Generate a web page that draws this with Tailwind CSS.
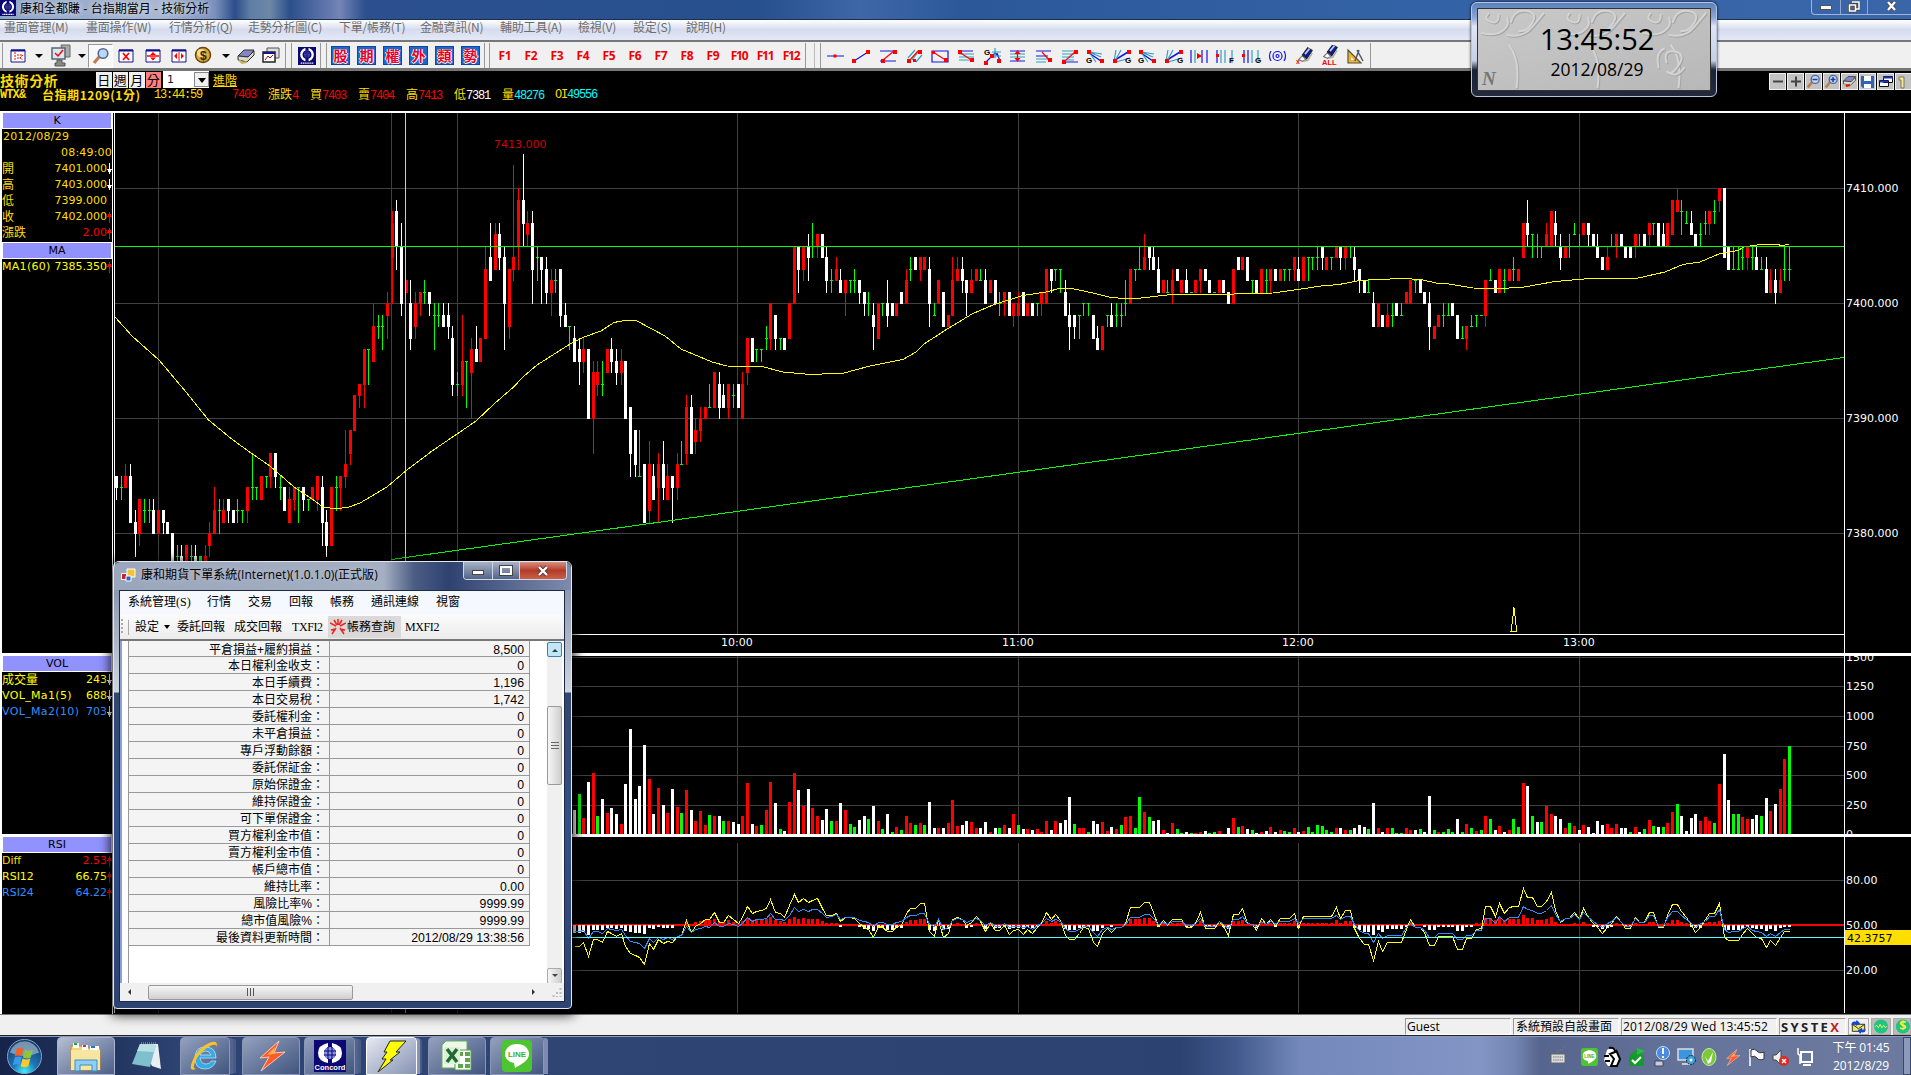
<!DOCTYPE html>
<html lang="zh-Hant">
  <head>
    <meta charset="UTF-8" />
    <meta name="viewport" content="width=device-width, initial-scale=1.0" />
    <title>康和全都賺 - 台指期當月 - 技術分析</title>
    <script src="https://cdn.jsdelivr.net/npm/@tailwindcss/browser@4"></script>
  </head>
  <body
    class="relative flex h-screen flex-col overflow-hidden bg-black font-['Liberation_Sans','Noto_Sans_CJK_TC',sans-serif] text-[12px] leading-none whitespace-nowrap"
  >
    <!-- Shared symbols -->
    <svg class="hidden">
      <symbol id="concord" viewBox="0 0 20 20">
        <rect width="20" height="20" fill="#0b0773" />
        <circle cx="10" cy="8.5" r="6.3" fill="none" stroke="#fff" stroke-width="2.6" />
        <path d="M10 0v4M10 13v4" stroke="#0b0773" stroke-width="3.4" />
        <circle cx="10" cy="8.5" r="3.4" fill="#4146a8" />
        <path d="M7 7h6M7 10h6M10 5v7" stroke="#0b0773" stroke-width=".7" />
        <path d="M3 18h14" stroke="#fff" stroke-width="1.4" stroke-dasharray="1.5 .6" />
      </symbol>
      <symbol id="bolt" viewBox="0 0 32 32">
        <path d="M24 1 5 18l9-1-8 14 24-19-11 1z" fill="#ff5a2a" stroke="#ffc9b5" stroke-width="1" />
        <path d="m20 7-8 8 7-1z" fill="#ffb04a" />
      </symbol>
      <symbol id="pen" viewBox="0 0 20 20">
        <path d="m3 15 4-4 4 4-4 2z" fill="#fff" stroke="#777" />
        <path d="m7 10 6-8 5 3-6 9z" fill="#0b1a9a" stroke="#222" />
        <path d="m10 9 5-6" stroke="#b8c8ff" stroke-width="2" />
        <path d="m8 17 5-1 5-8" stroke="#aaa" fill="none" stroke-width="1.5" />
      </symbol>
      <symbol id="lens" viewBox="0 0 18 18">
        <path d="m2 16 5-6" stroke="#c47b4a" stroke-width="3" />
        <circle cx="11" cy="6.5" r="4.8" fill="#bcd8f4" stroke="#55679c" stroke-width="1.6" />
      </symbol>
      <symbol id="printer" viewBox="0 0 20 18">
        <path d="M2 9 8 3h10l-5 7z" fill="#8486c8" stroke="#333" />
        <path d="M2 9v4l9 2 7-7V4l-6 6z" fill="#d8d8c8" stroke="#333" />
        <path d="m3 13 3 3 5-1" stroke="#c9b060" stroke-width="2" fill="none" />
      </symbol>
      <symbol id="line" viewBox="0 0 30 32">
        <rect width="30" height="32" rx="4" fill="#4cc531" />
        <path d="M15 4C8 4 3 8 3 14c0 5 4 8 9 9l1 5c5-3 14-7 14-14 0-6-5-10-12-10z" fill="#fff" />
        <text x="15" y="17" text-anchor="middle" font-size="8" font-weight="700" fill="#3fb026" font-family="Liberation Sans">LINE</text>
      </symbol>
      <symbol id="up" viewBox="0 0 5 12"><path d="M2 1h1v11H2zM1 3h3v2H1zM0 5h5v1H0z" fill="#f00" /></symbol>
      <symbol id="down" viewBox="0 0 5 12"><path d="M2 0h1v11H2zM1 7h3v2H1zM0 6h5v1H0z" fill="#fff" /></symbol>
    </svg>

    <!-- Title bar -->
    <header
      class="flex h-5 shrink-0 items-start bg-[linear-gradient(90deg,#8da3c8_0,#a8b6cf_160px,#7a90bd_215px,#2b4d8a_235px,#5f7da5_250px,#6d87a5_270px,#2b4f8c_290px,#7484b8_340px,#2c508f_365px,#27508f_760px,#3e67a8_860px,#2c5899_960px,#3464a8_1500px,#3a66a8_1911px)] border-b border-[#1b2f50]"
    >
      <svg class="h-4 w-4"><use href="#concord" /></svg>
      <span class="ml-1 pt-[3px] text-[12px] text-black [text-shadow:0_0_6px_#fff]">康和全都賺 - 台指期當月 - 技術分析</span>
      <div class="ml-auto flex h-[15px] w-[100px] rounded-bl border-b border-l border-[#9fb4d8] text-white">
        <div class="flex w-[29px] items-center justify-center border-r border-[#8ea6d0]">
          <div class="mt-px h-[5px] w-3 border border-[#555] bg-white"></div>
        </div>
        <div class="flex w-[27px] items-center justify-center border-r border-[#8ea6d0]">
          <svg class="h-3 w-3" fill="none"><path d="M4 1h7v7H8M1.500 4h6v6h-6z" stroke="#444" stroke-width="3" /><path d="M4 1h7v7H8M1.500 4h6v6h-6z" stroke="#fff" stroke-width="1.500" /></svg>
        </div>
        <div class="flex flex-1 items-center justify-center pl-1">
          <svg class="h-3 w-3"><path d="m2 1 7 8M9 1 2 9" stroke="#444" stroke-width="4" /><path d="m2 1 7 8M9 1 2 9" stroke="#fff" stroke-width="2.400" /></svg>
        </div>
      </div>
    </header>

    <!-- Menu -->
    <nav
      class="flex h-5 shrink-0 border-t border-white bg-linear-to-b from-[#fbfcfe] via-[#d6dcee] via-45% to-[#e4e9f8] pl-1 font-['Noto_Sans_CJK_TC',sans-serif] text-[12px] leading-[12px] tracking-[-0.2px] text-[#6d6d6d]"
    >
      <span class="w-[82px]">畫面管理(M)</span>
      <span class="w-[83px]">畫面操作(W)</span>
      <span class="w-[79px]">行情分析(Q)</span>
      <span class="w-[91px]">走勢分析圖(C)</span>
      <span class="w-[81px]">下單/帳務(T)</span>
      <span class="w-[80px]">金融資訊(N)</span>
      <span class="w-[78px]">輔助工具(A)</span>
      <span class="w-[55px]">檢視(V)</span>
      <span class="w-[53px]">設定(S)</span>
      <span>說明(H)</span>
    </nav>

    <!-- Toolbar -->
    <div class="flex h-[31px] shrink-0 items-center border-t-2 border-b-3 border-[#767676] bg-[#f0f0f0] pt-px">
      <div class="ml-0.5 h-[25px] w-px bg-[#999]"></div>
      <svg class="ml-1.5 h-5 w-[20px]" viewBox="0 0 20 20">
        <path d="M2 4h14v12H2z" fill="#fff" stroke="#13138a" /><path d="M2 4.500h14" stroke="#13138a" stroke-width="2" /><path d="M6 6v8M8 9h6M8 12h3l3-3M11 12l3 2" stroke="red" stroke-width="1" fill="none" stroke-dasharray="2 1" />
      </svg>
      <svg class="ml-[6px] h-2 w-2"><path d="M0 2h8L4 6z" /></svg>
      <svg class="ml-1.5 h-6 w-6" viewBox="0 0 24 24">
        <path d="M12 1h9v12h-7z" fill="#aaa" stroke="#666" /><path d="M3 4h13v11H3z" fill="#d8e8ee" stroke="#567" stroke-width="1.500" /><path d="m6 9 3 3 5-6" stroke="red" stroke-width="1.500" fill="none" /><path d="M8 16h5v3h3v3H6v-3h2z" fill="#888" stroke="#555" />
      </svg>
      <svg class="ml-[5px] h-2 w-2"><path d="M0 2h8L4 6z" /></svg>
      <div class="ml-0.5 flex h-6 w-[25px] items-center justify-center border border-t-[#999] border-r-white border-b-white border-l-[#999] bg-[#f8f8f8]">
        <svg class="h-[18px] w-[18px]"><use href="#lens" /></svg>
      </div>
      <svg class="ml-[5px] h-5 w-[78px]" viewBox="0 0 78 20" stroke="#13138a" fill="#fff">
        <path d="M1 4h14v12H1zM28 4h14v12H28zM54 4h14v12H54z" /><path d="M1 4.500h14M28 4.500h14M54 4.500h14" stroke-width="2" />
        <path d="m5 7 6 7M11 7l-6 7" stroke="red" stroke-width="1.700" /><path d="M29 10h12" stroke="red" stroke-width="1.500" /><path d="m32 9 3-3 3 3zM32 11.500l3 3 3-3zM59 7v6l-3-3zM63 7v6l3-3z" fill="red" stroke="none" /><path d="M61 6v9" stroke="red" />
      </svg>
      <svg class="-ml-1 h-5 w-[22px]" viewBox="0 0 22 20">
        <circle cx="11" cy="9" r="7.500" fill="#d8a83a" stroke="#6b4308" stroke-width="1.500" /><circle cx="9" cy="7" r="4" fill="#f3dc92" /><text x="8" y="14" font-size="12" font-weight="700" fill="#3c2503">$</text>
      </svg>
      <svg class="ml-2 h-2 w-2"><path d="M0 2h8L4 6z" /></svg>
      <svg class="ml-1.5 h-[18px] w-5"><use href="#printer" /></svg>
      <svg class="ml-[5px] h-5 w-5" viewBox="0 0 20 20">
        <path d="M6 2h12v10H6z" fill="#ddd" stroke="#555" /><path d="M2 6h12v10H2z" fill="#fff" stroke="#222" stroke-width="1.500" /><path d="m4 14 3-4 2 2 3-3" stroke="#c00" fill="none" /><path d="M2 7h12" stroke="#13138a" stroke-width="2" />
      </svg>
      <div class="ml-1 h-[25px] w-px bg-[#999]"></div>
      <div class="ml-[5px] h-[25px] w-px bg-[#999]"></div>
      <svg class="ml-[6px] h-5 w-[18px]" preserveAspectRatio="none"><use href="#concord" /></svg>
      <div class="ml-[4px] h-[25px] w-px bg-[#999]"></div>
      <div class="ml-[5px] h-[25px] w-px bg-[#999]"></div>
      <div class="ml-[4px] flex gap-[7px] font-['Noto_Sans_CJK_TC',sans-serif] text-[14px] leading-[17px] font-bold text-[#e8002a] [text-shadow:1px_0_0_#fff,-1px_0_0_#fff,0_1px_0_#fff]">
        <span class="h-[19px] w-[19px] border border-[#0d47a5] bg-[#1b69ce] text-center">股</span>
        <span class="h-[19px] w-[19px] border border-[#0d47a5] bg-[#1b69ce] text-center">期</span>
        <span class="h-[19px] w-[19px] border border-[#0d47a5] bg-[#1b69ce] text-center">權</span>
        <span class="h-[19px] w-[19px] border border-[#0d47a5] bg-[#1b69ce] text-center">外</span>
        <span class="h-[19px] w-[19px] border border-[#0d47a5] bg-[#1b69ce] text-center">類</span>
        <span class="h-[19px] w-[19px] border border-[#0d47a5] bg-[#1b69ce] text-center">勢</span>
      </div>
      <div class="ml-1 h-[25px] w-px bg-[#999]"></div>
      <div class="ml-1 h-[25px] w-px bg-[#999]"></div>
      <div class="ml-0.5 flex text-center font-['Open_Sans',sans-serif] text-[12px] font-bold tracking-[-0.2px] text-[#f00000]">
        <span class="w-[26px]">F1</span><span class="w-[26px]">F2</span><span class="w-[26px]">F3</span><span class="w-[26px]">F4</span>
        <span class="w-[26px]">F5</span><span class="w-[26px]">F6</span><span class="w-[26px]">F7</span><span class="w-[26px]">F8</span>
        <span class="w-[26px]">F9</span><span class="w-[26px] tracking-[-1.3px]">F10</span><span class="w-[26px] tracking-[-1.3px]">F11</span><span class="w-[26px] tracking-[-1.3px]">F12</span>
      </div>
      <div class="ml-px h-[25px] w-px bg-[#999]"></div>
      <div class="ml-[8px] h-[25px] w-px bg-[#bbb]"></div>
      <div class="ml-[5px] h-[25px] w-px bg-[#999]"></div>
      <!-- Drawing tools, one 26px cell each -->
      <svg class="h-[22px] w-[549px]" viewBox="823 0 549 22" fill="none" stroke-width="1.2">
        <g stroke="#1414e6">
          <path d="M829 11h17M856 16l14-9M882 6h16M882 16h16M934 6h16v11h-16zM960 6h15M1038 6h15M1038 11h12M1064 17h16M988 17l9-9 3 3M999 8l3 8M1012 6h15M1012 16h15M1193 5v13M1209 5v13M1204 5v13M1219 5v13M1246 5v13M1250 5v13" />
          <path d="m1091 8 12 8M1117 15l13-8M1143 8l12 8M1169 15l13-8" stroke-width="1.5" />
          <circle cx="1279.500" cy="11" r="1.500" /><circle cx="1279.500" cy="11" r="4.500" />
          <path d="M1273 6q-3 5 0 10M1286 6q3 5 0 10" />
        </g>
        <path d="M961 9h15M961 12h15M961 15h15M1012 9h15M1012 12h15M1038 14h14M1038 17h10M1064 6h12M1064 9h12M1064 12h12M1064 15h12M997 3v10M994 7h9M994 11h9M910 13l7-8M914 15l7-9M918 17l6-7M1091 7l13 2M1091 7l12 5M1091 7l7 10M1116 16l2-11M1117 16l6-11M1118 17l14-4M1143 7l13 2M1143 7l12 5M1143 7l7 10M1168 16l2-11M1169 16l6-11M1170 17l14-4M1197 5v13M1223 5v13M1227 5v13M1234 5v13M1254 5v13M1260 5v13" stroke="#2f9fc0" />
        <g stroke="#e11" stroke-width="1.300"><path d="m885 15 11-9M935 7l14 9M961 7l14 9M912 15l8-9M1019.500 7v8M1044 7l8 9M1068 15l9-8" /><path d="M1199 11h4" /></g>
        <g fill="#f00">
          <path d="M835.500 9.500h3v3h-3zM854 14h4v4h-4zM868 5h4v4h-4zM883 14h4v4h-4zM895 5h4v4h-4zM909 14h4v4h-4zM920 5h4v4h-4zM915 14h3v3h-3zM934 6h3v3h-3zM946 13h4v4h-4zM960 5h4v4h-4zM972 13h4v4h-4zM986 16h4v4h-4zM992 9h4v4h-4zM999 14h4v4h-4zM1016.500 9l3-4 3 4zM1016.500 13l3 4 3-4zM1050 13h4v4h-4zM1064 15h4v4h-4zM1076 5h4v4h-4zM1089 5h4v4h-4zM1102 14h4v4h-4zM1115 14h4v4h-4zM1129 5h4v4h-4zM1141 5h4v4h-4zM1154 14h4v4h-4zM1167 14h4v4h-4zM1181 5h4v4h-4zM1199 8l5 3-5 3zM1218 9h3v3h-3zM1244 9h3v3h-3z" />
        </g>
        <g fill="#000" font-size="8" font-weight="700" font-family="Liberation Sans">
          <text x="986" y="10">G</text><text x="1088" y="18">G</text><text x="1127" y="18">G</text><text x="1140" y="18">G</text><text x="1179" y="18">G</text><text x="1231" y="18">F</text><text x="1257" y="18">G</text>
        </g>
        <use href="#pen" x="1298" y="1" width="18" height="18" />
        <use href="#pen" x="1323" y="-2" width="18" height="18" />
        <g fill="#f00" font-weight="700" font-family="Liberation Sans"><text x="1298" y="19" font-size="7">x</text><text x="1324" y="20" font-size="7.500">ALL</text></g>
        <path d="M1350 5v13h13z" fill="#efb13c" stroke="#553" /><path d="M1353 12v3h3z" fill="#fff" /><path d="m1359 5 6 11M1361 5l-4 11" stroke="#556" stroke-width="1.500" />
      </svg>
      <div class="h-[25px] w-px bg-[#999]"></div>
    </div>

    <!-- Quote header -->
    <section class="relative h-10 shrink-0 bg-black font-['Noto_Sans_CJK_TC',sans-serif] text-[#ffde00]">
      <div class="flex h-[17px] items-center">
        <b class="w-24 text-[14px] leading-4 tracking-[0.6px]">技術分析</b>
        <div class="flex gap-px text-center text-[13px] leading-4 text-black">
          <span class="h-4 w-[15.500px] bg-[#f0f0f0]">日</span><span class="h-4 w-[15.500px] bg-[#f0f0f0]">週</span><span class="h-4 w-[15.500px] bg-[#f0f0f0]">月</span><span class="h-4 w-[15.500px] bg-[#ff7f7f]">分</span>
        </div>
        <div class="ml-0.5 flex h-[17px] w-[46px] items-center justify-between bg-white pl-1 font-['DejaVu_Sans',sans-serif] text-[11px] text-[#113]">
          1
          <span class="flex h-[15px] w-[15px] items-center justify-center border border-[#888] bg-[#f0f0f0]"><svg class="h-2 w-2"><path d="M0 2h8L4 7z" /></svg></span>
        </div>
        <u class="ml-1 text-[12px] leading-4">進階</u>
      </div>
      <div class="flex h-[14px] items-center text-[12px] leading-[14px]">
        <b class="w-[42px] font-['Liberation_Mono',monospace] tracking-[-0.9px]">WTX&amp;</b>
        <b class="w-28 tracking-[0.550px]">台指期1209(1分)</b>
        <span class="w-[78px] font-['Liberation_Mono',monospace] tracking-[-1.200px]">13:44:59</span>
        <span class="w-9 font-['Liberation_Mono',monospace] tracking-[-1.200px] text-[#f00]">7403</span>
        <span class="w-[42px]">漲跌<i class="font-['Liberation_Mono',monospace] tracking-[-1.200px] text-[#f00] not-italic">4</i></span>
        <span class="w-12">買<i class="font-['Liberation_Mono',monospace] tracking-[-1.200px] text-[#f00] not-italic">7403</i></span>
        <span class="w-12">賣<i class="font-['Liberation_Mono',monospace] tracking-[-1.200px] text-[#f00] not-italic">7404</i></span>
        <span class="w-12">高<i class="font-['Liberation_Mono',monospace] tracking-[-1.200px] text-[#f00] not-italic">7413</i></span>
        <span class="w-12">低<i class="font-['Liberation_Mono',monospace] tracking-[-1.200px] text-white not-italic">7381</i></span>
        <span class="w-[53px]">量<i class="font-['Liberation_Mono',monospace] tracking-[-1.200px] text-[#0ff] not-italic">48276</i></span>
        <span class="font-['Liberation_Mono',monospace] tracking-[-1.200px]">OI<i class="text-[#0ff] not-italic">49556</i></span>
      </div>
      <!-- Chart buttons -->
      <div class="absolute top-0.5 right-0 flex w-[142px] gap-px overflow-hidden">
        <svg class="h-[17px] w-[17px] shrink-0 border border-[#eee] bg-[#c3c3c3]"><path d="M3 7.500h10" stroke="#444" stroke-width="2" /></svg>
        <svg class="h-[17px] w-[17px] shrink-0 border border-[#eee] bg-[#c3c3c3]"><path d="M3 7.500h10M8 2.500v10" stroke="#444" stroke-width="2" /></svg>
        <svg class="h-[17px] w-[17px] shrink-0 border border-[#eee] bg-[#c3c3c3]"><use href="#lens" width="15" height="15" /><path d="M6.500 5.500h5" stroke="#223f9a" stroke-width="1.500" /></svg>
        <svg class="h-[17px] w-[17px] shrink-0 border border-[#eee] bg-[#c3c3c3]"><use href="#lens" width="15" height="15" /><path d="M6.500 5.500h5M9 3v5" stroke="#223f9a" stroke-width="1.500" /></svg>
        <svg class="h-[17px] w-[17px] shrink-0 border border-[#eee] bg-[#c3c3c3]"><use href="#printer" width="15" height="14" /><path d="m4 12 4-1" stroke="red" stroke-width="2" /></svg>
        <svg class="h-[17px] w-[17px] shrink-0 border border-[#eee] bg-[#c3c3c3]"><path d="M1 2h13v12H3l-2-2z" fill="#2f63b8" /><path d="M4 2h7v5H4zM4 10h7v4H4z" fill="#fff" /></svg>
        <svg class="h-[17px] w-[17px] shrink-0 border border-[#eee] bg-[#c3c3c3]"><path d="M5.500 2.500h9v6h-9zM1.500 6.500h9v6h-9z" fill="#fff" stroke="#111" /><path d="M5 3.500h10M2 7.500h8" stroke="#1b2fc0" stroke-width="2" /></svg>
        <svg class="h-[17px] w-[17px] shrink-0 border border-[#eee] bg-[#c3c3c3]"><path d="M3 3h5v11H5V6H3z" fill="#ffe98a" stroke="#776" /></svg>
      </div>
    </section>

    <!-- Indicator values + charts -->
    <main class="flex h-[903px] shrink-0">
      <aside
        class="flex w-[113px] shrink-0 flex-col border-t-2 border-r border-l-2 border-white font-['DejaVu_Sans','Noto_Sans_CJK_TC',sans-serif] text-[11px] text-[#ffde00]"
      >
        <div class="h-[543px] border-b-3 border-white">
          <div class="h-4 border-x border-b border-white bg-[#9292ff] text-center leading-[15px] text-black">K</div>
          <div class="h-4 pl-px leading-4 tracking-[0.3px]">2012/08/29</div>
          <div class="h-4 text-right leading-4 tracking-[0.2px]">08:49:00</div>
          <div class="flex h-4 items-center leading-4"><span class="text-[12px]">開</span><span class="ml-auto">7401.000</span><svg class="h-3 w-[5px]"><use href="#down" /></svg></div>
          <div class="flex h-4 items-center leading-4"><span class="text-[12px]">高</span><span class="ml-auto">7403.000</span><svg class="h-3 w-[5px]"><use href="#down" /></svg></div>
          <div class="flex h-4 items-center leading-4"><span class="text-[12px]">低</span><span class="mr-[5px] ml-auto">7399.000</span></div>
          <div class="flex h-4 items-center leading-4"><span class="text-[12px]">收</span><span class="ml-auto">7402.000</span><svg class="h-3 w-[5px]"><use href="#up" /></svg></div>
          <div class="flex h-4 items-center leading-4"><span class="text-[12px]">漲跌</span><span class="ml-auto text-[#f00]">2.00</span><svg class="h-3 w-[5px]"><use href="#up" /></svg></div>
          <div class="mt-px h-[17px] border border-white bg-[#9292ff] text-center leading-[15px] text-black">MA</div>
          <div class="flex h-4 items-center leading-4 text-[#ff0]"><span class="tracking-[0.3px]">MA1(60)</span><span class="ml-auto">7385.350</span><svg class="h-3 w-[5px]"><use href="#up" /></svg></div>
        </div>
        <div class="h-[181px] border-b-3 border-white text-[#ff0]">
          <div class="h-4 border-x border-b border-white bg-[#9292ff] text-center leading-[15px] text-black">VOL</div>
          <div class="flex h-4 items-center leading-4"><span class="text-[12px]">成交量</span><span class="ml-auto">243</span><svg class="h-3 w-[5px]"><use href="#down" /></svg></div>
          <div class="flex h-4 items-center leading-4"><span class="tracking-[0.35px]">VOL_Ma1(5)</span><span class="ml-auto">688</span><svg class="h-3 w-[5px]"><use href="#down" /></svg></div>
          <div class="flex h-4 items-center leading-4 text-[#2e90ff]"><span class="tracking-[0.35px]">VOL_Ma2(10)</span><span class="ml-auto">703</span><svg class="h-3 w-[5px]"><use href="#down" /></svg></div>
        </div>
        <div class="text-[#ff0]">
          <div class="h-4 border-x border-b border-white bg-[#9292ff] text-center leading-[15px] text-black">RSI</div>
          <div class="flex h-4 items-center leading-4 text-[#ffde00]"><span>Diff</span><span class="ml-auto text-[#f00]">2.53</span><svg class="h-3 w-[5px]"><use href="#up" /></svg></div>
          <div class="flex h-4 items-center leading-4"><span>RSI12</span><span class="ml-auto">66.75</span><svg class="h-3 w-[5px]"><use href="#up" /></svg></div>
          <div class="flex h-4 items-center leading-4 text-[#2e90ff]"><span>RSI24</span><span class="ml-auto">64.22</span><svg class="h-3 w-[5px]"><use href="#up" /></svg></div>
        </div>
      </aside>

      <svg id="chart" class="h-[903px] w-[1798px]" viewBox="113 111 1798 903" shape-rendering="crispEdges" fill="none" font-family="DejaVu Sans, sans-serif" font-size="11">
        <path
          stroke="#404040"
          d="M115 188.500H1844M115 303.500H1844M115 418.500H1844M115 533.500H1844M115 657.500H1844M115 686.500H1844M115 716.500H1844M115 746.500H1844M115 775.500H1844M115 805.500H1844M115 880.500H1844M115 970.500H1844M158.500 113V1013M391.500 113V1013M457.500 113V1013M737.500 113V634M737.500 656V1013M1018.500 113V634M1018.500 656V1013M1298.500 113V634M1298.500 656V1013M1579.500 113V634M1579.500 656V1013"
        />
        <g id="candles"></g>
        <g id="volume"></g>
        <path d="M115 925H1844" stroke="#f00" stroke-width="2" />
        <g id="rsi"></g>
        <polyline
          stroke="#ff0"
          points="115,317 132,336 159,360 186,392 208.500,420 233,440 251,453 270,466 294,487 312,499 323,507 336,509 349,507 360,503 387,487 405.600,471 432,451 457,434 476,421 494,404 513.500,387 523,377 537,365 570,344 584,337 601,331 614,322.500 627,320 637,321 665,336 681,349 712,362 727,366 762,366.500 783,372 811,374.500 844,373 870,366 903,359.500 916,352 924,344 948,328.500 972,314 994,304.500 1023,295.500 1046,292 1061,288 1072,288.500 1093,293 1111,297.500 1132,299 1154,296.500 1171,294.500 1219,295 1242,293.500 1273,293 1298,289.500 1321,286 1339,284.500 1357,281 1374,279.500 1407,278.500 1423,280 1436,283 1449,284 1473,288 1502,288.500 1524,287 1555,281.500 1590,278.500 1636,278.500 1665,272 1683,264.500 1700,262 1720,253.500 1738,250.500 1744,247 1760,244.500 1777,244.500 1782,245.500 1789,244.500"
        />
        <path d="M115 246.500H1844" stroke="#0f0" />
        <path d="M391 559.500 1844 357.500" stroke="#0f0" />
        <path d="M405.500 113V1013M115 937.500H1844" stroke="#5ff" />
        <path d="M1511 631.500h6l-1-7-2-17-2 17z" stroke="#ff0" />
        <text x="494" y="148" fill="#d00000">7413.000</text>
        <g id="labels" fill="#fff"></g>
        <path d="M113 837h1798v6H113z" fill="#000" />
        <path d="M115 634.500H1844M1844.500 113V1013M114.500 113V1013" stroke="#fff" />
        <path d="M113 111h1798v2H113zM113 653h1798v3H113zM113 834h1798v3H113z" fill="#fff" />
        <path d="M1845 930h66v15h-66z" fill="#ffde00" />
        <text x="1847" y="942" fill="#000">42.3757</text>
      </svg>
    </main>

    <!-- Status bar -->
    <footer class="flex h-[22px] shrink-0 items-end border-t border-b border-t-[#777] border-b-[#222] bg-[#f0f0f0] font-['Open_Sans','Noto_Sans_CJK_TC',sans-serif] text-[12px] leading-4 text-black">
      <div class="ml-auto h-[17px] w-[106px] border border-t-[#999] border-r-white border-b-white border-l-[#999] pl-px">Guest</div>
      <div class="ml-0.5 h-[17px] w-[106px] border border-t-[#999] border-r-white border-b-white border-l-[#999] pl-0.5">系統預設自設畫面</div>
      <div class="ml-0.5 h-[17px] w-[156px] border border-t-[#999] border-r-white border-b-white border-l-[#999] pl-px tracking-[0.1px]">2012/08/29 Wed 13:45:52</div>
      <div class="ml-0.5 h-[17px] w-[67px] border border-t-[#999] border-r-white border-b-white border-l-[#999] pl-px text-[13px] font-bold tracking-[2.400px] text-[#222]">SYSTE<span class="text-[#b22]">X</span></div>
      <svg class="ml-0.5 h-[17px] w-[21px] border border-[#aaa]" viewBox="0 0 20 17"><path d="M3 6h14v8H3z" fill="#ece86a" stroke="#222" /><path d="m3 6 7 5 7-5" stroke="#222" fill="none" /><path d="M2 7q0-5 5-4l1-2 4 4-5 3V6q-4 0-5 1zM18 11q0 5-5 4l-1 2-3-4 5-3v2q3 0 4-1z" fill="#1446d8" /></svg>
      <svg class="ml-0.5 h-[17px] w-5 border border-[#aaa] bg-[#bbb]" viewBox="0 0 20 17"><circle cx="10" cy="8.500" r="8" fill="#1fc47e" /><path d="m3 9 2-2 2 3 2-4 2 4 2-3 2 3 2-2" stroke="#fff36a" fill="none" /></svg>
      <svg class="ml-0.5 h-[17px] w-[18px] border border-[#aaa] bg-[#bbb]" viewBox="0 0 18 17"><circle cx="10" cy="8.500" r="8" fill="#1fc47e" /><text x="6" y="13" font-size="14" font-weight="700" fill="#ffe93a">$</text></svg>
    </footer>

    <!-- Taskbar -->
    <div
      class="flex h-[39px] shrink-0 items-center border-t border-[#8b9bc0] bg-[linear-gradient(90deg,#16244a_0,#22355f_110px,#2d4372_180px,#2f4675_600px,#2c4270_1180px,#40598c_1235px,#7488bb_1300px,#8295c5_1480px,#7385b2_1515px,#56658d_1540px,#66749b_1700px,#6c7aa0_1880px)]"
    >
      <svg class="ml-1.5 h-[37px] w-[37px]" viewBox="0 0 38 38">
        <defs><radialGradient id="orb" cx=".5" cy=".95" r=".9"><stop offset="0" stop-color="#3ff0ff" /><stop offset=".4" stop-color="#1d75b4" /><stop offset="1" stop-color="#183a66" /></radialGradient></defs>
        <circle cx="19" cy="19" r="17.500" fill="url(#orb)" stroke="#7fa6cc" /><path d="M4 15a15.500 15.500 0 0 1 30 0Q19 22 4 15z" fill="#c7d6e6" opacity=".55" />
        <path d="M11 11q4-2 7 0l-2 8q-3-2-7 0z" fill="#f0622b" /><path d="M19.500 12q4 2 8 0l-2 8q-4 2-8 0z" fill="#8cc63f" /><path d="M9 20q4-2 7 0l-2 8q-3-2-7 0z" fill="#3b9be8" /><path d="M17 21q4 2 8 0l-2 8q-4 2-8 0z" fill="#fdc92f" />
      </svg>
      <div class="ml-[14px] flex h-[38px] w-[58px] items-center justify-center rounded-t border border-[#aab4cc] bg-linear-to-br from-[#b6bfd2] to-[#4d5f8b]">
        <svg class="h-8 w-8" viewBox="0 0 32 32"><path d="M1 6h10l2 2h17v22H1z" fill="#f1d477" stroke="#b68f2c" /><path d="M3 3h6v5H3zM12 5h6v5h-6zM20 6h9v5h-9z" fill="#fff" /><path d="M4 3h3v2H4z" fill="#2a3" /><path d="M13 5h3v2h-3z" fill="#d33" /><path d="M21 6h4v2h-4z" fill="#27c" /><path d="M1 10h29v20H1z" fill="#f8e5a0" /><path d="M5 31V20h22v11h-5v-6H10v6z" fill="#8fd0f2" stroke="#3b8dc5" /></svg>
      </div>
      <svg class="ml-4 h-8 w-8" viewBox="0 0 32 32"><path d="M10 4h17l3 25-9-3z" fill="#e8eef2" /><path d="m9 4 16 1-6 22L1 24z" fill="#7fbfce" /><path d="m9 4 16 1-2 7-17-1z" fill="#b9dfe6" /><path d="M10 3h16" stroke="#777" stroke-width="2" stroke-dasharray="1 1" /></svg>
      <div class="ml-[17px] flex h-[38px] w-[50px] items-center justify-center rounded-t border border-[#8a97b8] bg-linear-to-br from-[#94a1bd] to-[#41557f] shadow-[4px_0_0_-1px_#52648e,8px_0_0_-2px_#4a5c86]">
        <svg class="h-[34px] w-[34px]" viewBox="0 0 34 34"><path d="M28 19H12q1 6 6 6 4 0 5-3h5q-3 8-11 8Q7 30 7 19T17 8q11 0 11 11zM12 16h11q-1-4-5.500-4T12 16z" fill="#39a9e6" stroke="#c6ebfb" stroke-width=".7" /><path d="M8 30Q0 33 4 23 9 9 21 4q9-4 8 4 0-4-7-1Q11 13 7 23q-3 7 1 7z" fill="#f6c32c" /></svg>
      </div>
      <div class="ml-3 flex h-[38px] w-[58px] items-center justify-center rounded-t border border-[#8a97b8] bg-linear-to-br from-[#94a1bd] to-[#41557f]"><svg class="h-8 w-8"><use href="#bolt" /></svg></div>
      <div class="ml-1 flex h-[38px] w-[51px] items-center justify-center rounded-t border border-[#8a97b8] bg-linear-to-br from-[#94a1bd] to-[#41557f] shadow-[4px_0_0_-1px_#52648e,8px_0_0_-2px_#4a5c86]">
        <svg class="h-8 w-8" viewBox="0 0 32 32"><path d="M0 0h32v32H0z" fill="#0b0773" /><path d="M14 3v4q-4 2-4 6t4 6v4Q4 21 4 13T14 3zM18 3v4q4 2 4 6t-4 6v4q10-2 10-10T18 3z" fill="#fff" /><circle cx="16" cy="13" r="6" fill="#8a8fe0" /><path d="M10 11h12M10 15h12M14 7v12M18 7v12" stroke="#0b0773" /><text x="16" y="30" text-anchor="middle" font-size="7.500" font-weight="700" fill="#fff">Concord</text></svg>
      </div>
      <div class="ml-[11px] flex h-[38px] w-[51px] items-center justify-center rounded-t border border-white bg-linear-to-br from-[#e6e9f0] to-[#8693b4] shadow-[4px_0_0_-1px_#8795b5,7px_0_0_-2px_#4a5c86]">
        <svg class="h-8 w-8" viewBox="0 0 32 32"><path d="M14 1h16L20 12h4L14 20h3L2 32l8-13H6l5-7H8z" fill="#ff0" stroke="#222" stroke-width="1" /></svg>
      </div>
      <div class="ml-[11px] flex h-[38px] w-[58px] items-center justify-center rounded-t border border-[#8a97b8] bg-linear-to-br from-[#94a1bd] to-[#41557f]">
        <svg class="h-8 w-8" viewBox="0 0 32 32"><path d="M5 1h21v27H1V5z" fill="#eef7e8" stroke="#6cab5c" /><path d="M14 10h16v20H14z" fill="#fff" stroke="#569c47" /><path d="M17 12h5v4h-5zM24 12h5v4h-5zM24 18h5v4h-5zM17 24h5v4h-5zM24 24h5v4h-5z" fill="#5aa84b" /><path d="M3 7h16v17H3z" fill="#dff0d8" /><path d="m6 9 10 13M16 9 6 22" stroke="#1e6b32" stroke-width="3.500" /></svg>
      </div>
      <div class="ml-1 flex h-[38px] w-[54px] items-center justify-center rounded-t border border-[#8a97b8] bg-linear-to-br from-[#94a1bd] to-[#41557f] shadow-[5px_0_0_-1px_#7c8aac]"><svg class="h-8 w-[30px]"><use href="#line" /></svg></div>

      <!-- Tray -->
      <svg class="ml-auto h-6 w-[274px]" viewBox="1548 -1 274 24">
        <path d="M1551 9h14v9h-14z" fill="#ddd" stroke="#666" /><path d="M1553 12h10M1553 15h10M1557 8q0-3 4-3 3 0 3-4" stroke="#777" fill="none" stroke-dasharray="1.500 .7" />
        <use href="#line" x="1581" y="3" width="17" height="18" />
        <g><path d="M1607 5q5-4 9 0l4 8-2 8h-10l-4-6z" fill="#fff" /><path d="M1609 3q6-1 6 4l-5 2 4 5-3 7h6l3-7-4-9M1604 11h5M1605 16h5" stroke="#000" stroke-width="2" fill="none" /></g>
        <path d="M1629 11l7-6 8 6v10h-15z" fill="#159a2c" /><path d="M1637 3l8 3-8 4z" fill="#1dc43a" /><path d="m1632 15 3 3 6-6" stroke="#fff" stroke-width="2" fill="none" />
        <circle cx="1663" cy="8" r="6.500" fill="#4a8be0" stroke="#bfe0ff" /><path d="M1663 3v6M1663 11v2" stroke="#fff" stroke-width="2" /><path d="M1655 16h8v5h-8z" fill="#ccd" stroke="#446" />
        <path d="M1678 4h15v11h-15z" fill="#3b96dd" stroke="#ddd" stroke-width="1.500" /><path d="M1682 19h8" stroke="#ccc" stroke-width="2" /><circle cx="1691" cy="15" r="4.500" fill="#3aa0d8" stroke="#123" stroke-dasharray="2 1" /><circle cx="1691" cy="15" r="1.500" fill="#fff" />
        <ellipse cx="1709" cy="12" rx="7" ry="8.500" fill="#7cc83c" stroke="#c2eda0" /><path d="m1705 11 3 5 5-9-2 10-3 2z" fill="#fff" />
        <use href="#bolt" x="1724" y="4" width="17" height="17" />
        <path d="M1750 4v17" stroke="#fff" stroke-width="1.500" /><path d="M1751 5q4-2 6 1t7 1v7q-5 2-7-1t-6-1z" fill="#fff" stroke="#333" />
        <path d="M1773 10h3l5-5v15l-5-5h-3z" fill="#eee" stroke="#444" /><circle cx="1784" cy="16" r="5" fill="#dc2a1f" /><path d="m1782 14 4 4M1786 14l-4 4" stroke="#fff" stroke-width="1.500" />
        <path d="M1801 7h11v10h-11zM1803 20h8" fill="none" stroke="#fff" stroke-width="2" /><path d="M1798 3v5q0 2 2 2v9" stroke="#fff" stroke-width="1.500" fill="none" />
      </svg>
      <div class="w-[78px] pt-0.5 text-center font-['Open_Sans','Noto_Sans_CJK_TC',sans-serif] text-[12px] leading-[18px] tracking-[-0.100px] text-white">
        <p>下午 01:45</p>
        <p>2012/8/29</p>
      </div>
      <div class="ml-[3px] h-[38px] w-2 border border-[#3b4868] bg-[#8c99bb]"></div>
    </div>

    <!-- Order system window -->
    <section
      class="absolute isolate top-[561px] left-[113px] flex h-[448px] w-[459px] flex-col rounded-t-md rounded-b border border-[#dfe8f5] bg-[linear-gradient(180deg,transparent_0_28px,#8b98b2_28px,#d0d6e0_130px,#32476f_131px,#33508a_260px,#2d4372_100%)] pr-1.5 pb-1.5 pl-[5px] shadow-[0_3px_12px_3px_rgba(0,0,0,0.8)]"
    >
      <div class="absolute inset-x-0 top-0 -z-10 h-7 rounded-t-md bg-[linear-gradient(90deg,#9aa6bc_0,#a4afc2_270px,#4c5d84_300px,#2f4270_335px,#7f8cad_458px)]"></div>
      <div class="flex h-7 shrink-0 items-start">
        <svg class="mt-1.5 ml-0.5 h-[15px] w-[15px]"><path d="M.5 5.500h5v6h-5z" fill="#c22" stroke="#fff" /><path d="M6 1h8v8H6z" fill="#f5c33a" stroke="#fff" /><path d="M5 8h5v5H5z" fill="#2b62d0" stroke="#fff" /></svg>
        <span class="mt-[5px] ml-[5px] font-['Open_Sans','Noto_Sans_CJK_TC',sans-serif] text-[12px] leading-4 tracking-[0.05px] text-black [text-shadow:0_0_6px_#ccd]">康和期貨下單系統(Internet)(1.0.1.0)(正式版)</span>
        <div class="absolute top-0 right-[4px] flex h-[18px] w-[104px] overflow-hidden rounded-b border border-t-0 border-[#cfd6e4]">
          <div class="flex w-[29px] items-center justify-center border-r border-[#cfd6e4] bg-linear-to-b from-[#a9b3c6] to-[#53648a]"><div class="mt-1 h-[5px] w-3 border border-[#444] bg-white"></div></div>
          <div class="flex w-[27px] items-center justify-center border-r border-[#cfd6e4] bg-linear-to-b from-[#a9b3c6] to-[#53648a]"><div class="h-[9px] w-3 border-2 border-white outline outline-[#444]"></div></div>
          <div class="flex flex-1 items-center justify-center bg-linear-to-b from-[#d78f83] via-[#b33a27] via-50% to-[#c9604a]"><svg class="h-3 w-3"><path d="m2 2 8 8M10 2l-8 8" stroke="#533" stroke-width="4" /><path d="m2 2 8 8M10 2l-8 8" stroke="#fff" stroke-width="2.400" /></svg></div>
        </div>
      </div>
      <div class="flex min-h-0 flex-1 flex-col border border-[#1c2a45] bg-[#f0f0f0] font-['Liberation_Serif','Noto_Sans_CJK_TC',serif] text-[12px] text-black">
        <div class="flex h-6 shrink-0 bg-[#f5f8fe] pl-2 leading-[23px]">
          <span class="w-[79px]">系統管理(S)</span><span class="w-[41px]">行情</span><span class="w-[41px]">交易</span><span class="w-[41px]">回報</span><span class="w-[41px]">帳務</span><span class="w-[65px]">通訊連線</span><span>視窗</span>
        </div>
        <div class="flex h-[26px] shrink-0 items-center border-b-2 border-[#777] bg-linear-to-b from-[#fbfbfb] to-[#ececec]">
          <svg class="h-5 w-2.5"><path d="M2 2v16" stroke="#aaa" stroke-width="2" stroke-dasharray="2 2" /><path d="M8.500 3v15" stroke="#aaa" /></svg>
          <span class="ml-[5px]">設定</span>
          <svg class="ml-[5px] h-1.5 w-1.5"><path d="M0 1h6L3 5z" /></svg>
          <span class="ml-[7px]">委託回報</span>
          <span class="ml-[9px]">成交回報</span>
          <span class="ml-[10px] w-[31px] tracking-[-0.4px]">TXFI2</span>
          <span class="ml-[5px] flex h-[22px] w-[73px] items-center bg-[#dcd8d8] pl-[2px]">
            <svg class="mr-px h-4 w-4" viewBox="-8 -8 16 16" stroke="#e22" stroke-width="1.500" fill="none"><path d="M0-2v-6M2-1l6-3M2 1l4 6M-2 1l-4 6M-2-1l-6-3M-2 2l-5 1M2 2l5 1M-1-2l-3-5M1-2l3-5" /></svg>帳務查詢
          </span>
          <span class="ml-1 tracking-[-0.4px]">MXFI2</span>
        </div>
        <div class="flex min-h-0 flex-1">
          <div class="w-[9px] shrink-0 border-r border-l-2 border-r-[#999] border-l-[#8ba3cc] bg-white"></div>
          <div id="account" class="h-[343px] w-[401px] shrink-0 overflow-hidden bg-white font-['Liberation_Sans','Noto_Sans_CJK_TC',sans-serif]"></div>
          <div class="flex h-[343px] flex-1 bg-white pl-[17px]">
            <div class="flex w-[15px] flex-col bg-[#f0f0f0]">
              <div class="mt-px flex h-[15px] shrink-0 items-center justify-center rounded-xs border border-[#3c7fb1] bg-[#c4e5f6]"><svg class="h-2 w-2"><path d="M1 6h6L4 3z" fill="#245" /></svg></div>
              <div class="mt-[49px] flex h-[79px] items-center justify-center rounded-xs border border-[#999] bg-linear-to-r from-[#f6f6f6] to-[#cfcfcf]"><svg class="h-2.5 w-2"><path d="M0 1.500h8M0 4.500h8M0 7.500h8" stroke="#666" /></svg></div>
              <div class="mt-auto flex h-4 items-center justify-center rounded-xs border border-[#aaa] bg-linear-to-r from-[#f6f6f6] to-[#cfcfcf]"><svg class="h-2 w-2"><path d="M1 2h6L4 5z" fill="#444" /></svg></div>
            </div>
          </div>
        </div>
        <div class="flex h-[18px] shrink-0 items-center bg-[#f0f0f0]">
          <svg class="ml-1.5 h-2 w-2"><path d="M5 1v6L2 4z" fill="#333" /></svg>
          <div class="ml-[14px] flex h-[15px] w-[205px] items-center justify-center rounded-xs border border-[#999] bg-linear-to-b from-[#f6f6f6] to-[#cfcfcf]"><svg class="h-2 w-2.5"><path d="M1.500 0v8M4.500 0v8M7.500 0v8" stroke="#555" /></svg></div>
          <svg class="ml-auto h-2 w-2"><path d="M3 1v6l3-3z" fill="#333" /></svg>
          <svg class="mr-0.5 ml-[13px] h-3 w-3"><path d="M10.500 2v9M7 6v5M3.500 9v2" stroke="#bbb" stroke-width="2" stroke-dasharray="2 2" /></svg>
        </div>
      </div>
    </section>

    <!-- Clock gadget -->
    <section class="absolute top-0.5 left-[1471px] h-[95px] w-[246px] rounded-md border border-[#b9c6de] bg-[linear-gradient(180deg,#5a80bd,#8ca6d6_16%,#dfe5f4_25%,#c5cfe6_62%,#1b2236_72%,#222a3c)] p-[5px] shadow-[0_0_3px_#000]">
      <div class="relative flex h-full flex-col items-center border border-[#333] bg-linear-to-br from-[#c9c9c9] to-[#b8b8b8] font-['Open_Sans',sans-serif] text-black">
        <svg class="absolute inset-0 h-full w-full" viewBox="0 0 233 82" fill="none" stroke-width="2">
          <g id="swirl"></g>
        </svg>
        <p class="relative mt-3 ml-1.5 text-[29px] leading-9">13:45:52</p>
        <p class="relative ml-1.5 text-[17.500px] leading-6">2012/08/29</p>
        <b class="absolute bottom-0.5 left-1 font-['Liberation_Serif',serif] text-[19px] text-[#777] italic">N</b>
      </div>
    </section>

    <script>
      // Account query rows
      const account = [
        ["平倉損益+履約損益：", "8,500"],
        ["本日權利金收支：", "0"],
        ["本日手續費：", "1,196"],
        ["本日交易稅：", "1,742"],
        ["委託權利金：", "0"],
        ["未平倉損益：", "0"],
        ["專戶浮動餘額：", "0"],
        ["委託保証金：", "0"],
        ["原始保證金：", "0"],
        ["維持保證金：", "0"],
        ["可下單保證金：", "0"],
        ["買方權利金市值：", "0"],
        ["賣方權利金市值：", "0"],
        ["帳戶總市值：", "0"],
        ["維持比率：", "0.00"],
        ["風險比率%：", "9999.99"],
        ["總市值風險%：", "9999.99"],
        ["最後資料更新時間：", "2012/08/29 13:38:56"],
      ];
      document.getElementById("account").innerHTML = account
        .map(
          ([label, value], i) => `
        <div class="flex ${i ? "h-[17px]" : "h-[16px]"} border-b border-r border-[#999] bg-[#f4f4f4] text-right leading-[18px]">
          <span class="w-[201px] border-r border-[#999] pr-[5px]">${label}</span>
          <span class="flex-1 pr-[5px] text-[12.300px]">${value}</span>
        </div>`
        )
        .join("");

      // One-minute candles: colour, high, body top, body bottom, low (points above 7370)
      const firstMinute = -133;
      const candles = `
        w15151413 g15141413 r16151414 w16151111 w12111008 r13131009 g13121211 g13121211 w13121010 r12121010
        w12121110 w11111010 w10100606 g09080807 w09080707 r09090707 g09080807 w09080707 g08080707 r09080707
        r11100908 r14121010 g13121210 r13121111 w13131211 w12121111 g13121211 g12121211 r14141211 g17141413
        g14141413 r15151313 g15151514 r17171514 w17171514 g15141413 w14141212 r14131111 r14141312 g14141411
        w14141312 g13131312 r14141313 r15151312 w15141109 w12110908 r14140909 g15141412 r15151412 r19161514
        r19191716 r22221919 r23232221 r26262321 g26262623 r30282525 g29282827 g29282826 r31302927 r38373430
        w39383533 w37353029 r32323131 w32302726 r31302827 r31313029 g32313130 w31313029 g30292926 g30292928
        w30292828 w30292827 w28272322 g24232322 r29252322 g25252521 r27262420 w28262525 r27272525 r35332727
        w37343232 r37363333 w37363433 w35343026 r33332827 r42343332 r40393533 w43393735 r38373635 w38373330
        g35343432 w34343330 w34333130 r33323129 g33323231 w33332928 w30292828 g28282826 w28272525 w27262523
        r27262524 w26262020 r25242017 r25242322 g25232322 r26262424 w27262524 w26252423 r26252423 w25252020
        w21211715 w19191615 g19151515 w16161111 r18161211 w16151313 r17161411 w18161413 r16151313 w15151411
        r17161413 g18161616 r22211716 w22211717 r20191817 r21201918 r21212020 g23212121 r24242121 w24232120
        w23222121 r23232120 g23222221 w23232121 r24232020 r27272423 w27272525 g26262625 g26262625 g28272726
        r30302726 w29292726 g27272726 w27272626 r30302727 r35353030 w35353331 r35353332 w36353432 g37353534
        r36363534 w36363434 w35343231 g33323231 r34333232 w33323131 r32323129 g32323231 g33323231 w32323130
        w31313029 g31303029 w30292826 r30302727 g30303029 w32302928 w30302929 r30302929 w31313030 r33323030
        g34333332 w34343333 r34343332 r34343333 w34333028 g30292929 r32323030 w31312828 r29292828 r34322929
        r34333232 w34333231 w32323129 r33323131 r33333232 g33323232 w33323030 r32323131 w32323030 g31303029
        r31313029 w31312929 r30302928 r31302929 w31312929 r30302929 w30302929 g30303029 r31313029 r33333030
        w33333231 g33333332 g33333331 w32312929 w30292826 w29292827 g29292927 g30303029 g30303029 w29292727
        w28272626 r28282626 g29292928 w30292828 g30292928 g30292928 g32303029 r33333030 g33333332 g35333333
        r36343333 w35353433 w35343333 w34333131 r32323131 g32313131 r33323130 w33333232 r32323131 w33323131
        g31313131 r32323131 r33333231 w33333232 w32323131 g31313131 r32323131 w32323131 w31313030 r33333030
        w34343333 r34343333 w34343232 g32323231 w32323131 r33333131 g33323231 r33333231 w33333232 r33333232
        g33333332 g33333332 r34343332 w34333232 r34343232 g34343432 g34343433 g35343433 w35353433 r34343333
        g34343433 r35353434 w35353433 r35353433 g35353534 w35343332 w33333231 w32323131 g32313131 w31302828
        r30302828 w29292828 r30292828 g30292928 w30302929 g30292929 r31313030 r32323030 g32323231 w32323131
        w31313030 w31302826 r28282727 r29292828 g30292928 g30292929 w30302929 w29292727 g28272727 r28282726
        g29282828 g29292928 g29292929 r32322928 g33323232 w32323131 r33333131 g33323231 r33333232 g34333332
        r33333232 r37373434 w39373635 g36363634 g36353534 g35353534 r37363535 r38383535 w38373635 w36353433
        r35353434 g36353534 g37363636 g36353535 r37373636 w37373635 w36363535 w36353434 w34343333 r35343333
        g36353535 r36363534 w36363535 w35353434 w35353434 r36363534 g36353535 w36363535 r37373635 g37373736
        w37373535 w37363535 r37373535 r39393636 r40393838 g39383836 g38373737 w38373636 w36363535 g37363635
        g38373736 r38383736 g39383837 r40403938 w40403434 w35353333 g35333333 g35333333 g35343433 r35353433
        g35343433 w35343333 g34333333 w34333131 r33323131 w33323130 r33323131 g35333332 g35333332`
        .trim()
        .split(/\s+/);

      // Tops of the volume bars, in thirds of a pixel below y=640; the axis is at 583
      const volume = `
        w510 g462 r534 w426 r400 g528 w477 r519 w504 w522 r552 w432 w267 w477 w438 w316 r417 w522 r444 w495
        r519 w447 r501 g519 r450 w510 r543 r513 r555 g525 r528 w528 g543 r543 w546 w552 r528 r430 w552 r558
        g555 r510 r426 w489 g567 w573 r486 r400 w450 r498 w447 r504 r528 w540 w507 g543 r543 w489 r510 g552
        g561 w540 w528 g537 w498 r543 g567 w522 g576 r561 g570 r528 r549 g555 r549 g555 w486 w564 r564 w564
        r549 r480 r558 w555 w543 r546 r564 w564 w546 r576 w564 g564 r555 w564 r522 g555 w567 r567 w570 r567
        r576 r543 w570 r543 w549 w540 w471 g552 r564 r564 g576 w543 w552 r546 r573 w561 r567 g555 r531 r528
        g564 g471 r516 g531 w543 w540 r570 w579 r549 g567 g579 w576 g579 r579 r576 w573 g579 g576 r573 w582
        w564 r534 g561 r558 w567 g570 w579 r576 w573 r561 w576 r570 g573 g576 r564 w576 r573 g561 g576 g555
        g558 g570 g576 r564 w564 r570 g570 w564 w555 w561 g567 w489 r564 w576 r564 g564 g579 g579 r564 r570
        w570 g567 w576 w468 g570 r576 g576 g567 g576 w537 g576 r552 g564 r573 g570 r528 g537 w570 r558 w576
        r570 g537 g561 r429 w438 g528 w546 g546 r498 r522 w528 w537 r564 g549 r558 w570 r555 w561 w579 w543
        w555 r552 r564 r552 w564 w564 g576 r561 w576 g567 r540 g558 w561 g561 r549 r516 g492 w528 w573 w534
        w522 r543 r531 r543 g549 r432 w342 w480 g522 g522 r531 r537 w537 w525 g528 w474 r513 w492 r447 r357 g318`
        .trim()
        .split(/\s+/);

      // RSI12 and RSI24, same units, one value per minute
      const rsi12 = [
        919, 919, 906, 948, 898, 898, 906, 873, 879, 888, 878, 918, 940, 946, 951, 972, 910, 927, 898, 909,
        902, 907, 888, 886, 840, 876, 857, 848, 838, 838, 815, 846, 846, 826, 838, 850, 831, 797, 820, 812,
        811, 803, 778, 815, 818, 831, 796, 763, 787, 775, 787, 780, 774, 803, 826, 826, 819, 843, 832, 832,
        833, 848, 862, 866, 891, 859, 860, 874, 874, 858, 856, 820, 804, 804, 790, 790, 874, 888, 840, 890,
        878, 837, 830, 838, 855, 846, 829, 842, 874, 848, 871, 870, 856, 883, 869, 868, 881, 866, 880, 862,
        850, 816, 836, 821, 840, 885, 898, 898, 880, 862, 863, 906, 919, 879, 865, 877, 862, 862, 850, 802,
        802, 802, 787, 787, 815, 857, 840, 855, 838, 838, 838, 860, 862, 850, 817, 864, 865, 864, 842, 857,
        886, 822, 822, 805, 850, 851, 871, 833, 852, 837, 855, 835, 835, 835, 818, 860, 827, 827, 827, 827,
        827, 827, 827, 802, 833, 811, 811, 863, 893, 913, 912, 959, 904, 932, 907, 907, 907, 907, 866, 838,
        860, 861, 877, 916, 916, 889, 889, 889, 889, 928, 928, 894, 893, 867, 865, 797, 797, 827, 790, 819,
        800, 799, 799, 745, 772, 772, 799, 799, 784, 757, 811, 845, 833, 833, 815, 837, 805, 830, 848, 862,
        880, 862, 850, 827, 845, 864, 864, 830, 846, 846, 815, 815, 860, 860, 826, 793, 793, 812, 830, 854,
        877, 860, 838, 820, 820, 790, 892, 900, 901, 901, 883, 865, 880, 892, 895, 922, 900, 916, 890, 874, 874,
      ];
      const rsi24 = [
        874, 874, 870, 895, 874, 874, 880, 863, 868, 871, 867, 886, 902, 906, 910, 925, 895, 907, 890, 898,
        891, 896, 888, 884, 858, 877, 868, 863, 859, 860, 845, 859, 859, 850, 852, 857, 850, 832, 842, 838,
        838, 833, 820, 836, 836, 841, 824, 802, 814, 808, 814, 808, 806, 818, 830, 829, 823, 836, 832, 832,
        832, 840, 844, 846, 858, 845, 845, 851, 851, 845, 843, 831, 826, 826, 820, 820, 851, 859, 838, 866,
        862, 839, 834, 837, 845, 841, 834, 841, 856, 847, 858, 858, 850, 862, 857, 857, 862, 857, 866, 856,
        849, 833, 844, 836, 844, 865, 874, 874, 866, 857, 857, 877, 887, 868, 862, 868, 862, 862, 853, 832,
        832, 832, 823, 823, 835, 853, 846, 852, 844, 844, 844, 855, 855, 850, 835, 858, 858, 857, 843, 852,
        865, 838, 838, 829, 850, 851, 859, 842, 852, 842, 850, 842, 842, 842, 833, 850, 835, 835, 835, 835,
        835, 835, 835, 826, 838, 829, 829, 853, 871, 878, 878, 905, 880, 895, 886, 886, 886, 886, 862, 850,
        860, 862, 870, 892, 892, 880, 880, 880, 880, 898, 898, 886, 886, 870, 869, 835, 835, 850, 829, 842,
        830, 830, 830, 797, 808, 809, 820, 820, 811, 796, 822, 844, 833, 833, 823, 836, 817, 832, 843, 853,
        862, 850, 843, 832, 845, 858, 858, 835, 845, 845, 826, 826, 858, 858, 832, 814, 814, 825, 838, 850,
        862, 850, 842, 829, 829, 808, 868, 875, 874, 874, 865, 857, 870, 873, 875, 889, 880, 887, 875, 868, 868,
      ];

      const colors = { w: "#fff", r: "#f00", g: "#0f0" };
      const xAt = (minute) => Math.round(737.5 + minute * 4.673);
      const yAt = (point) => Math.round(188 + (40 - point) * 11.5);
      const rect = (x, y, w, h, fill) =>
        `<rect x="${x}" y="${y}" width="${w}" height="${h}" fill="${fill}"/>`;

      document.getElementById("candles").innerHTML = candles
        .map((candle, i) => {
          const color = colors[candle[0]];
          const [high, top, bottom, low] = candle.slice(1).match(/../g).map(Number);
          const x = xAt(firstMinute + i);
          return (
            rect(x, yAt(high), 1, yAt(low) - yAt(high) + 1, color) +
            rect(x - 1, yAt(top), 3, yAt(bottom) - yAt(top) + 1, color)
          );
        })
        .join("");

      document.getElementById("volume").innerHTML = volume
        .map((bar, i) => {
          const height = Math.round((583 - Number(bar.slice(1))) / 3);
          return rect(xAt(i - 35) - 1, 834 - height, 3, height, colors[bar[0]]);
        })
        .join("");

      const rsiLine = (values) =>
        values.map((v, i) => `${xAt(i - 35) + 0.5},${Math.round(640 + v / 3) + 0.5}`).join(" ");
      document.getElementById("rsi").innerHTML =
        rsi12
          .map((v, i) => {
            const diff = Math.round((rsi24[i] - v) / 6);
            const x = xAt(i - 35) - 1;
            if (diff > 0) return rect(x, 924 - diff, 3, diff, "#f00");
            if (diff < 0) return rect(x, 925, 3, 1 - diff, "#fff");
            return "";
          })
          .join("") +
        `<polyline points="${rsiLine(rsi12)}" stroke="#ff0"/>` +
        `<polyline points="${rsiLine(rsi24)}" stroke="#2e90ff"/>`;

      const labels = [
        [1846, 188, "7410.000"], [1846, 303, "7400.000"], [1846, 418, "7390.000"], [1846, 533, "7380.000"],
        [1846, 657, "1500"], [1846, 686, "1250"], [1846, 716, "1000"], [1846, 746, "750"],
        [1846, 775, "500"], [1846, 805, "250"], [1846, 834, "0"],
        [1846, 880, "80.00"], [1846, 925, "50.00"], [1846, 970, "20.00"],
        [721, 642, "10:00"], [1002, 642, "11:00"], [1282, 642, "12:00"], [1563, 642, "13:00"],
      ];
      document.getElementById("labels").innerHTML = labels
        .map(([x, y, text]) => `<text x="${x}" y="${y + 4}">${text}</text>`)
        .join("");

      // Embossed curls on the clock face
      const curl = "M2 24q14 4 22-2t4-14M10 4q-6 6 2 9t8-8M32 14q4-14 16-12t6 12-14 8M28 26q16 4 26-8t12-14M30 36q12 14 8 44";
      const flower = "M190 55q-4-14 8-12t4 14-12 6q10 8 18-4M182 60q-4-16 6-20";
      document.getElementById("swirl").innerHTML = [0, 82, 164]
        .map(
          (x) => `<g transform="translate(${x} 0)"><path d="${curl}" stroke="#a4a4a4" transform="translate(1 1)"/><path d="${curl}" stroke="#d4d4d4"/></g>`
        )
        .join("") + `<path d="${flower}" stroke="#a4a4a4" transform="translate(1 1)"/><path d="${flower}" stroke="#d4d4d4"/>`;
    </script>
  </body>
</html>
